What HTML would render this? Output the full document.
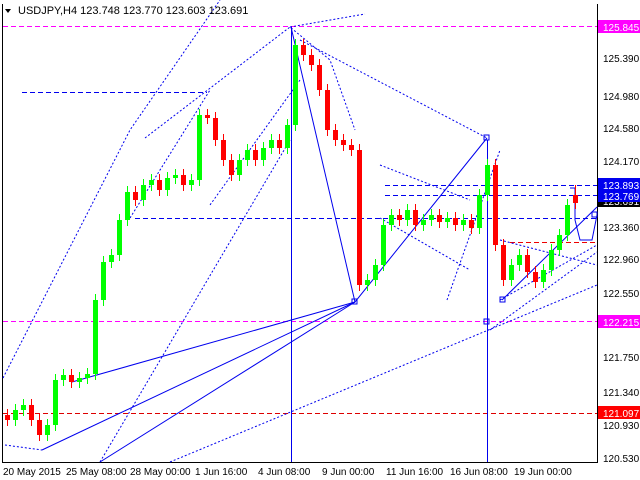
<!DOCTYPE html>
<html><head><meta charset="utf-8"><style>
html,body{margin:0;padding:0;background:#fff;}
svg{display:block;font-family:"Liberation Sans",sans-serif;}
</style></head><body>
<svg width="640" height="480" viewBox="0 0 640 480" xmlns="http://www.w3.org/2000/svg">
<rect width="640" height="480" fill="#fff"/>
<line x1="2.5" y1="4" x2="2.5" y2="462" stroke="#000"/>
<line x1="2" y1="462.5" x2="598" y2="462.5" stroke="#000"/>
<line x1="597.5" y1="4" x2="597.5" y2="463" stroke="#000"/>
<line x1="3" y1="26.5" x2="597" y2="26.5" stroke="#f0f" stroke-dasharray="5,3"/>
<line x1="3" y1="321.5" x2="597" y2="321.5" stroke="#f0f" stroke-dasharray="5,3"/>
<line x1="3" y1="413.5" x2="597" y2="413.5" stroke="#d00" stroke-dasharray="5,3"/>
<line x1="510" y1="242.5" x2="597" y2="242.5" stroke="#e00" stroke-dasharray="5,3"/>
<line x1="385" y1="185.5" x2="597" y2="185.5" stroke="#00e" stroke-dasharray="5,3"/>
<line x1="385" y1="195.5" x2="597" y2="195.5" stroke="#00e" stroke-dasharray="5,3"/>
<line x1="135" y1="218.5" x2="597" y2="218.5" stroke="#00e" stroke-dasharray="5,3"/>
<line x1="22" y1="92.5" x2="207" y2="92.5" stroke="#00e" stroke-dasharray="5,3"/>
<g stroke="#00e" fill="none" stroke-dasharray="2,2">
<path d="M3 378 L130 130 L220 0"/>
<path d="M130 218 L210 90"/>
<path d="M145 138 L290 27 L330 60 L355 130"/>
<path d="M290 27 L365 14"/>
<path d="M300 40 L487 138"/>
<path d="M300 80 L210 205"/>
<path d="M100 462 L290 140"/>
<path d="M170 462 L597 285"/>
<path d="M5 445 L42 450"/>
<path d="M380 165 L470 200"/>
<path d="M380 218 L470 270"/>
<path d="M500 300 L597 245"/>
<path d="M500 240 L597 265"/>
<path d="M447 300 L500 150"/>
<path d="M490 330 L597 252"/>
</g>
<g stroke="#00e" fill="none">
<line x1="291.5" y1="27" x2="291.5" y2="462"/>
<line x1="487.5" y1="140" x2="487.5" y2="462"/>
<path d="M291 27 L355 302 L487 138"/>
<path d="M72 382 L355 302"/>
<path d="M42 450 L355 302"/>
<path d="M100 462 L355 302"/>
<path d="M502 300 L597 207"/>
<path d="M570 188 L575 188 L575 220 L580 240 L592 240 L597 215"/>
<rect x="352" y="299" width="5" height="5"/>
<rect x="500" y="297" width="5" height="5"/>
<rect x="484" y="135" width="5" height="5"/>
<rect x="484" y="319" width="5" height="5"/>
<rect x="592" y="212" width="5" height="5"/>
</g>
<!-- candles -->
<path stroke="#0f0" fill="none" d="M15.5 404V426M23.5 399V416M47.5 419V441M55.5 374V431M63.5 369V386M79.5 372V388M87.5 368V384M95.5 294V380M103.5 256V306M111.5 249V268M119.5 214V261M127.5 186V226M143.5 179V206M151.5 174V191M167.5 172V196M175.5 169V184M191.5 174V191M199.5 109V186M239.5 154V181M247.5 144V166M263.5 142V166M271.5 134V154M287.5 119V154M295.5 39V131M367.5 274V291M375.5 259V286M383.5 219V271M391.5 209V231M407.5 204V226M423.5 214V231M431.5 209V226M447.5 212V228M463.5 214V231M479.5 189V234M487.5 159V201M511.5 259V286M519.5 249V271M543.5 264V288M551.5 244V276M559.5 229V256M567.5 199V241"/>
<path fill="#0f0" d="M13 410h5v10h-5zM21 405h5v5h-5zM45 425h5v10h-5zM53 380h5v45h-5zM61 375h5v5h-5zM77 378h5v4h-5zM85 374h5v4h-5zM93 300h5v74h-5zM101 262h5v38h-5zM109 255h5v7h-5zM117 220h5v35h-5zM125 192h5v28h-5zM141 185h5v15h-5zM149 180h5v5h-5zM165 178h5v12h-5zM173 175h5v3h-5zM189 180h5v5h-5zM197 115h5v65h-5zM237 160h5v15h-5zM245 150h5v10h-5zM261 148h5v12h-5zM269 140h5v8h-5zM285 125h5v23h-5zM293 45h5v80h-5zM365 280h5v5h-5zM373 265h5v15h-5zM381 225h5v40h-5zM389 215h5v10h-5zM405 210h5v10h-5zM421 220h5v5h-5zM429 215h5v5h-5zM445 218h5v4h-5zM461 220h5v5h-5zM477 195h5v33h-5zM485 165h5v30h-5zM509 265h5v15h-5zM517 255h5v10h-5zM541 270h5v12h-5zM549 250h5v20h-5zM557 235h5v15h-5zM565 205h5v30h-5z"/>
<path stroke="#f00" fill="none" d="M7.5 409V426M31.5 399V426M39.5 414V441M71.5 369V388M135.5 186V206M159.5 174V196M183.5 169V191M207.5 109V124M215.5 112V146M223.5 134V166M231.5 154V181M255.5 144V166M279.5 134V154M303.5 39V61M311.5 49V71M319.5 59V96M327.5 84V136M335.5 124V146M343.5 134V151M351.5 139V156M359.5 144V291M399.5 209V226M415.5 204V231M439.5 209V228M455.5 212V231M471.5 214V234M495.5 159V251M503.5 239V286M527.5 249V278M535.5 266V288M575.5 185V209"/>
<path fill="#f00" d="M5 415h5v5h-5zM29 405h5v15h-5zM37 420h5v15h-5zM69 375h5v7h-5zM133 192h5v8h-5zM157 180h5v10h-5zM181 175h5v10h-5zM205 115h5v3h-5zM213 118h5v22h-5zM221 140h5v20h-5zM229 160h5v15h-5zM253 150h5v10h-5zM277 140h5v8h-5zM301 45h5v10h-5zM309 55h5v10h-5zM317 65h5v25h-5zM325 90h5v40h-5zM333 130h5v10h-5zM341 140h5v5h-5zM349 145h5v5h-5zM357 150h5v135h-5zM397 215h5v5h-5zM413 210h5v15h-5zM437 215h5v7h-5zM453 218h5v7h-5zM469 220h5v8h-5zM493 165h5v80h-5zM501 245h5v35h-5zM525 255h5v17h-5zM533 272h5v10h-5zM573 195h5v8h-5z"/>
<g font-size="10" fill="#000">
<text x="603" y="62">125.390</text>
<text x="603" y="100">124.980</text>
<text x="603" y="132">124.580</text>
<text x="603" y="165">124.170</text>
<text x="603" y="231">123.360</text>
<text x="603" y="263">122.960</text>
<text x="603" y="297">122.550</text>
<text x="603" y="361">121.750</text>
<text x="603" y="396">121.340</text>
<text x="603" y="429">120.930</text>
<text x="603" y="462">120.530</text>
</g>
<rect x="598" y="20" width="42" height="13" fill="#f0f"/><text x="603" y="31" font-size="10" fill="#fff">125.845</text>
<rect x="598" y="195" width="42" height="12" fill="#000"/><text x="603" y="205" font-size="10" fill="#fff">123.691</text>
<rect x="598" y="178" width="42" height="24" fill="#00e"/>
<text x="603" y="189" font-size="10" fill="#fff">123.893</text><text x="603" y="200" font-size="10" fill="#fff">123.769</text>
<rect x="598" y="315" width="42" height="13" fill="#f0f"/><text x="603" y="326" font-size="10" fill="#fff">122.215</text>
<rect x="598" y="406" width="42" height="13" fill="#f00"/><text x="603" y="417" font-size="10" fill="#fff">121.097</text>
<g font-size="10" fill="#000">
<text x="3" y="475">20 May 2015</text>
<text x="66" y="475">25 May 08:00</text>
<text x="130" y="475">28 May 00:00</text>
<text x="195" y="475">1 Jun 16:00</text>
<text x="258" y="475">4 Jun 08:00</text>
<text x="322" y="475">9 Jun 00:00</text>
<text x="386" y="475">11 Jun 16:00</text>
<text x="450" y="475">16 Jun 08:00</text>
<text x="514" y="475">19 Jun 00:00</text>
</g>
<path d="M5 9 L11 9 L8 13 Z" fill="#000"/>
<text x="18" y="14" font-size="11" fill="#000">USDJPY,H4  123.748 123.770 123.603 123.691</text>
</svg>
</body></html>
